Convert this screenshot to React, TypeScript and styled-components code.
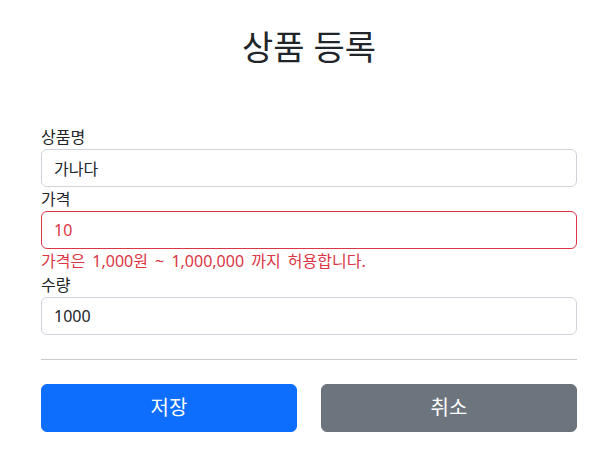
import styled, { createGlobalStyle } from "styled-components";

const GlobalStyle = createGlobalStyle`
  *, *::before, *::after {
    box-sizing: border-box;
  }

  body {
    margin: 0;
    background: #fff;
    color: #212529;
    font-family: "Noto Sans", "Noto Sans CJK KR", sans-serif;
    font-size: 16px;
    line-height: 1.5;
  }
`;

const Container = styled.div`
  width: 536px;
  margin: 0 0 0 calc(50% - 265px);
`;

const Header = styled.div`
  padding-top: 27px;
  margin-bottom: 58px;
  text-align: center;
`;

const Title = styled.h2`
  margin: 0;
  font-size: 34px;
  font-weight: 400;
  line-height: 40px;
`;

const Form = styled.form`
  display: flex;
  flex-direction: column;
`;

const Label = styled.label`
  display: block;
  line-height: 24px;
`;

const Input = styled.input<{ $invalid?: boolean }>`
  display: block;
  width: 100%;
  height: 38px;
  padding: 6px 12px;
  font: inherit;
  font-size: 16px;
  color: ${(p) => (p.$invalid ? "#dc3545" : "#212529")};
  background: #fff;
  border: 1px solid ${(p) => (p.$invalid ? "#dc3545" : "#ced4da")};
  border-radius: 6px;
  outline: none;
`;

const FieldError = styled.div`
  color: #dc3545;
  line-height: 24px;
  word-spacing: 3px;
`;

const Divider = styled.hr`
  margin: 24px 0;
  border: 0;
  border-top: 1px solid #c9cbcd;
`;

const ButtonRow = styled.div`
  display: grid;
  grid-template-columns: 1fr 1fr;
  gap: 24px;
`;

const Button = styled.button<{ $variant: "primary" | "secondary" }>`
  height: 48px;
  padding: 8px 16px;
  font: inherit;
  font-size: 20px;
  line-height: 30px;
  color: #fff;
  background: ${(p) => (p.$variant === "primary" ? "#0d6efd" : "#6c757d")};
  border: 1px solid
    ${(p) => (p.$variant === "primary" ? "#0d6efd" : "#6c757d")};
  border-radius: 6px;
  cursor: pointer;
`;

function App() {
  return (
    <>
      <GlobalStyle />
      <Container>
        <Header>
          <Title>상품 등록</Title>
        </Header>
        <Form onSubmit={(e) => e.preventDefault()}>
          <Label htmlFor="itemName">상품명</Label>
          <Input id="itemName" defaultValue="가나다" />
          <Label htmlFor="price">가격</Label>
          <Input id="price" defaultValue="10" $invalid />
          <FieldError>가격은 1,000원 ~ 1,000,000 까지 허용합니다.</FieldError>
          <Label htmlFor="quantity">수량</Label>
          <Input id="quantity" defaultValue="1000" />
          <Divider />
          <ButtonRow>
            <Button type="submit" $variant="primary">
              저장
            </Button>
            <Button type="button" $variant="secondary">
              취소
            </Button>
          </ButtonRow>
        </Form>
      </Container>
    </>
  );
}

export default App;
